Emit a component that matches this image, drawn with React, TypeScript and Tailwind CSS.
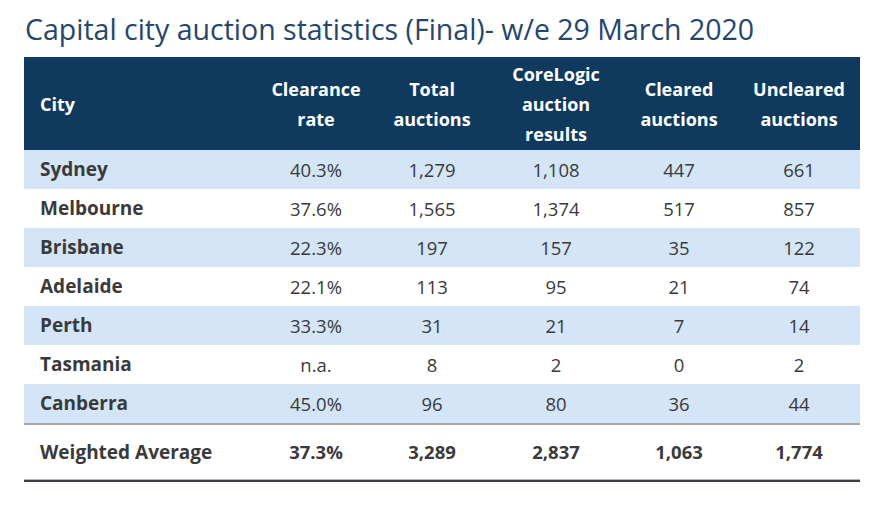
const cols = 'grid grid-cols-[236px_112px_120px_128px_118px_122px]'

const rows = [
  ['Sydney', '40.3%', '1,279', '1,108', '447', '661'],
  ['Melbourne', '37.6%', '1,565', '1,374', '517', '857'],
  ['Brisbane', '22.3%', '197', '157', '35', '122'],
  ['Adelaide', '22.1%', '113', '95', '21', '74'],
  ['Perth', '33.3%', '31', '21', '7', '14'],
  ['Tasmania', 'n.a.', '8', '2', '0', '2'],
  ['Canberra', '45.0%', '96', '80', '36', '44'],
]

const headers = [
  ['Clearance', 'rate'],
  ['Total', 'auctions'],
  ['CoreLogic', 'auction', 'results'],
  ['Cleared', 'auctions'],
  ['Uncleared', 'auctions'],
]

const App = () => {
  return (
    <div className="w-[882px] h-[507px] bg-white font-['Open_Sans',sans-serif] text-[#3a3a3a]">
      <div className="pl-[25px] pt-[9px] h-[57px] text-[28.5px] leading-[40px] text-[#26476b] whitespace-nowrap">
        Capital city auction statistics (Final)- w/e 29 March 2020
      </div>

      <div className="ml-[24px] w-[836px]">
        {/* header */}
        <div className={`${cols} h-[93px] bg-[#0f3a5d] text-white font-bold text-[18px] leading-[30px]`}>
          <div className="flex items-center pl-[16px]">City</div>
          {headers.map((h, i) => (
            <div key={i} className="flex flex-col items-center justify-center text-center">
              {h.map((line) => (
                <span key={line}>{line}</span>
              ))}
            </div>
          ))}
        </div>

        {rows.map((r, i) => (
          <div
            key={r[0]}
            className={`${cols} h-[39px] items-center text-[18.5px] ${
              i % 2 === 0 ? 'bg-[#d3e5f6]' : 'bg-white'
            }`}
          >
            <div className="pl-[16px] font-bold text-[19px]">{r[0]}</div>
            {r.slice(1).map((v, j) => (
              <div key={j} className="text-center">
                {v}
              </div>
            ))}
          </div>
        ))}

        <div className="h-[2px] bg-[#a3a7ab]" />

        <div className={`${cols} h-[54px] items-center text-[18.5px] font-bold`}>
          <div className="pl-[16px] text-[19px]">Weighted Average</div>
          <div className="text-center">37.3%</div>
          <div className="text-center">3,289</div>
          <div className="text-center">2,837</div>
          <div className="text-center">1,063</div>
          <div className="text-center">1,774</div>
        </div>

        <div className="h-[1px] bg-[#b5b8bb]" />
        <div className="h-[2px] bg-[#3b4046]" />
      </div>
    </div>
  )
}

export default App
